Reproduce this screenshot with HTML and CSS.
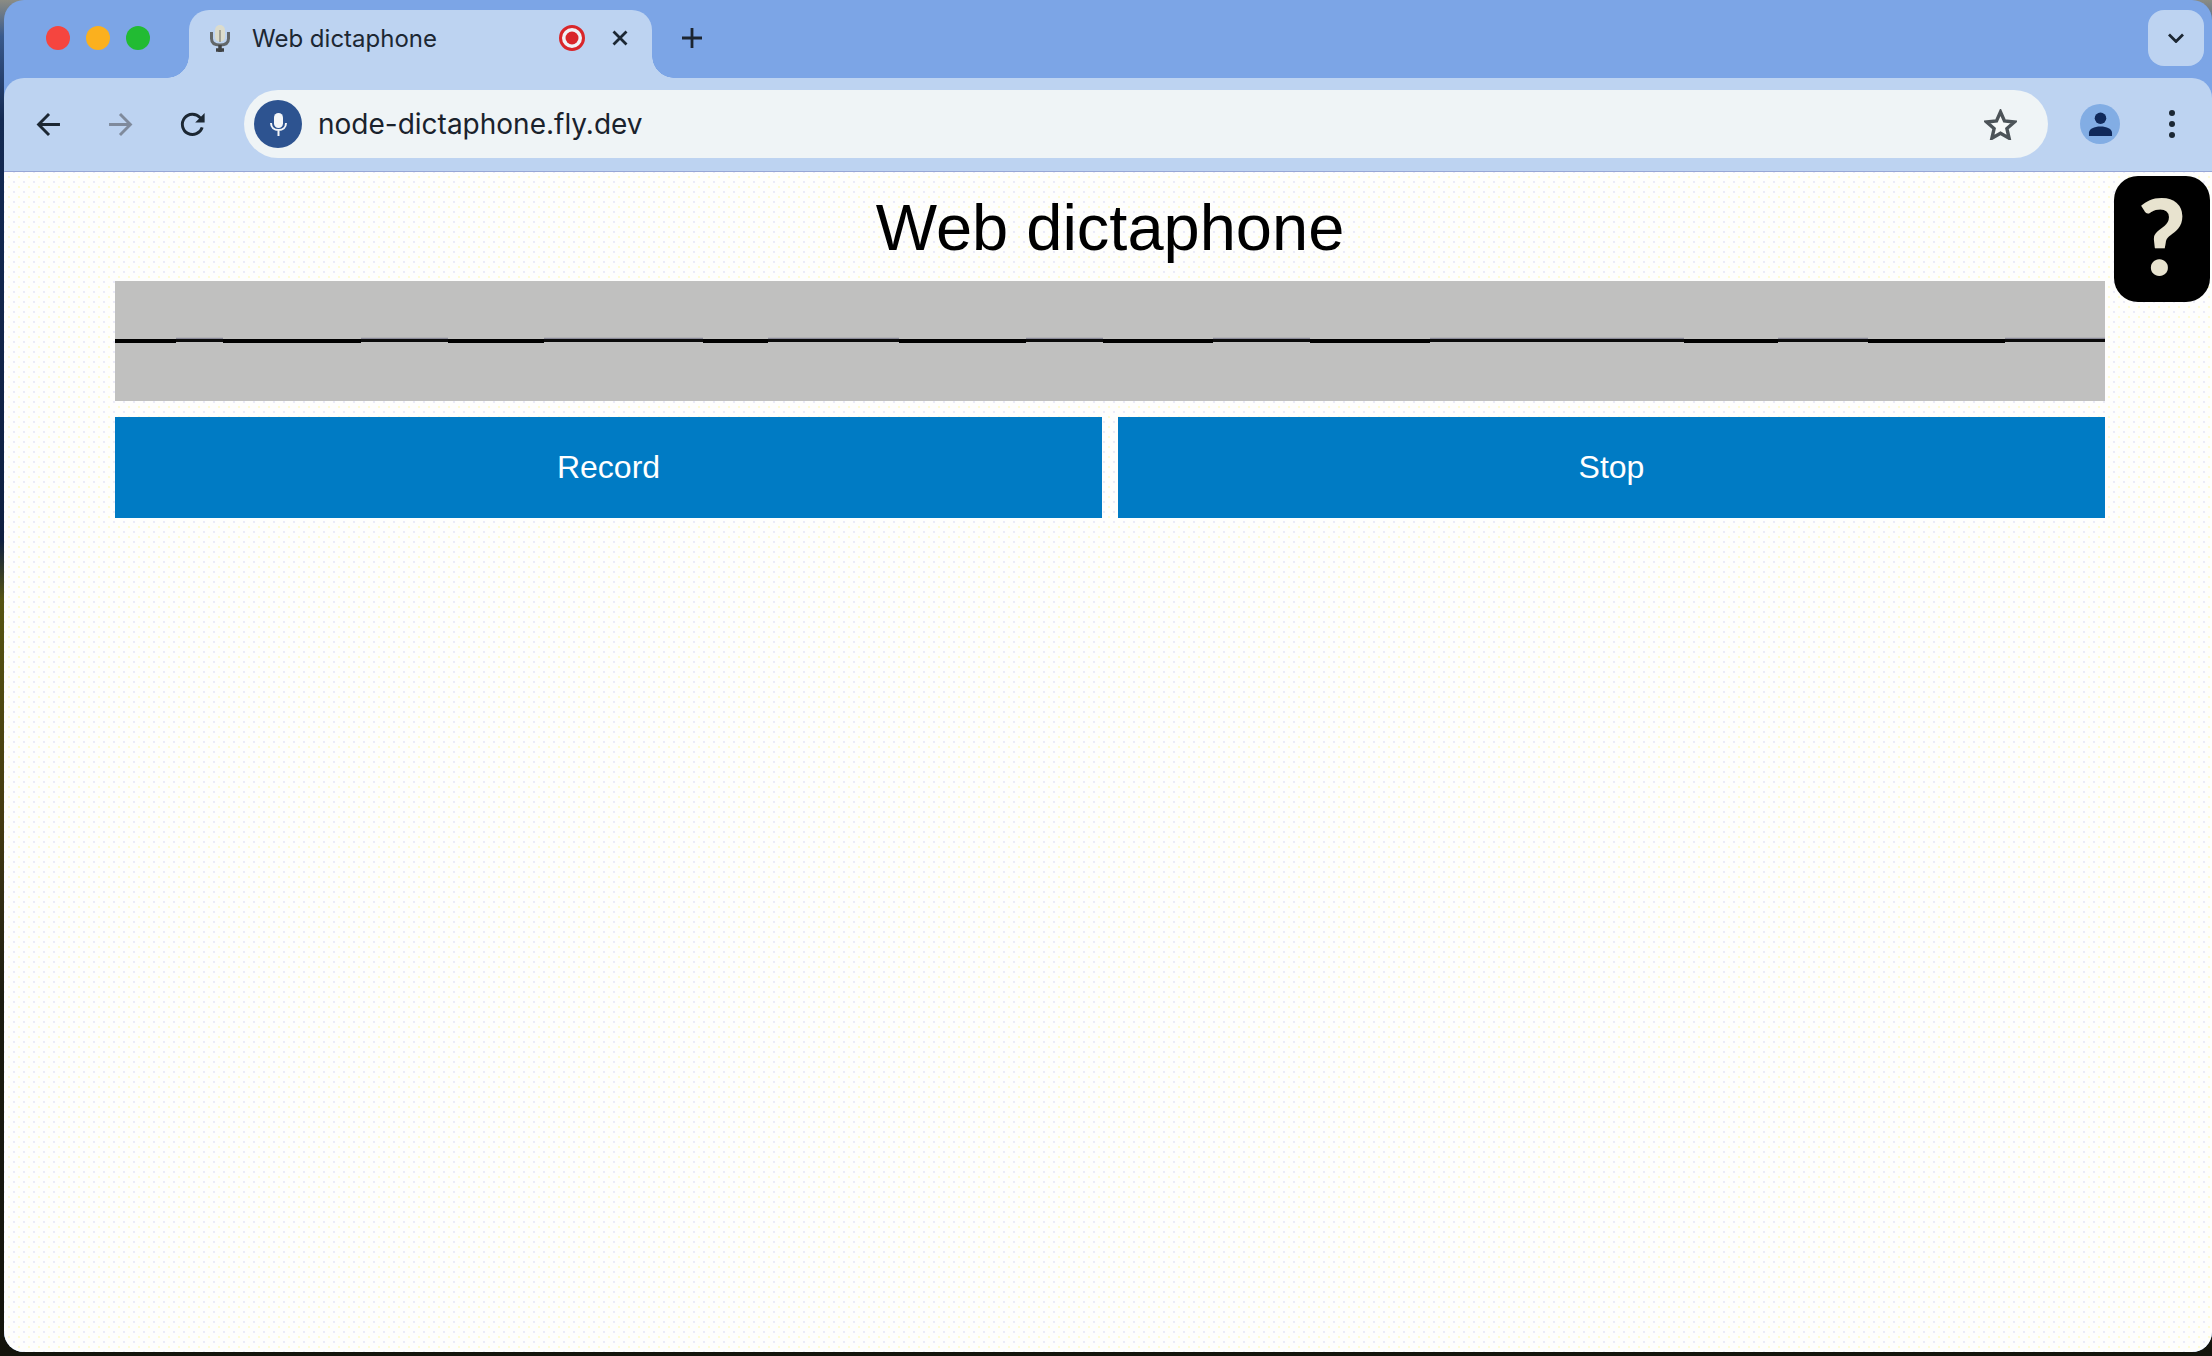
FILE: index.html
```html
<!DOCTYPE html>
<html lang="en">
<head>
<meta charset="utf-8">
<title>Web dictaphone</title>
<link rel="stylesheet" href="styles.css">
</head>
<body>
<div class="window">
  <header class="tabstrip">
    <div class="lights">
      <span class="light light-red"></span>
      <span class="light light-yellow"></span>
      <span class="light light-green"></span>
    </div>
    <div class="tab">
      <svg class="favicon" viewBox="0 0 20 27" width="20" height="27">
        <path d="M1.500 7v6.500c0 4 3 6.500 8.500 6.500s8.500-2.500 8.500-6.500V7" fill="none" stroke="#62676a" stroke-width="3"/>
        <rect x="5" y="0" width="10" height="17" rx="5" fill="#dcdccc"/>
        <rect x="9" y="5" width="2" height="12" fill="#a4a498"/>
        <path d="M10 20v7M6 25h8" stroke="#404346" stroke-width="3.500"/>
      </svg>
      <span class="tab-title">Web dictaphone</span>
      <svg class="rec" viewBox="0 0 26 26" width="26" height="26">
        <circle cx="13" cy="13" r="11.500" fill="#f0f2f6" stroke="#d9262a" stroke-width="3"/>
        <circle cx="13" cy="13" r="6.500" fill="#d9262a"/>
      </svg>
      <svg class="close" viewBox="0 0 16 16" width="16" height="16">
        <path d="M1.500 1.500l13 13M14.500 1.500l-13 13" stroke="#1c2733" stroke-width="2.800"/>
      </svg>
    </div>
    <svg class="newtab" viewBox="0 0 20 20" width="20" height="20">
      <path d="M10 0v20M0 10h20" stroke="#1c2530" stroke-width="2.800"/>
    </svg>
    <div class="tabsearch">
      <svg viewBox="0 0 16 10" width="16" height="10">
        <path d="M1 1.500l7 7 7-7" fill="none" stroke="#1c2733" stroke-width="2.800"/>
      </svg>
    </div>
  </header>
  <nav class="toolbar">
    <div class="navbtn">
      <svg viewBox="0 0 24 24" width="25" height="25"><path d="M23 12H2.500M12.500 2L2.500 12l10 10" fill="none" stroke="#1c2733" stroke-width="2.800"/></svg>
    </div>
    <div class="navbtn">
      <svg viewBox="0 0 24 24" width="25" height="25"><path d="M1 12h20.500M11.500 2l10 10-10 10" fill="none" stroke="#7f8a9c" stroke-width="2.800"/></svg>
    </div>
    <div class="navbtn">
      <svg viewBox="0 0 24 24" width="27" height="27"><path d="M20.600 14.500a9 9 0 1 1-1.900-8.600L21.500 8.600" fill="none" stroke="#1c2733" stroke-width="2.600"/><path d="M22.800 1.800v8.400h-8.400z" fill="#1c2733"/></svg>
    </div>
    <div class="omnibox">
      <span class="site-icon">
        <svg viewBox="0 0 17 23" width="17" height="23">
          <rect x="4" y="0" width="9" height="15" rx="4.500" fill="#f4f6f8"/>
          <path d="M1 10c0 4.500 3.200 7 7.500 7s7.500-2.500 7.500-7M8.500 17v6" fill="none" stroke="#f4f6f8" stroke-width="2"/>
        </svg>
      </span>
      <span class="url">node-dictaphone.fly.dev</span>
      <svg class="star" viewBox="0 0 34 32" width="33" height="31">
        <path d="M17 3l4.100 9.400 10.200 1-7.700 6.800 2.300 10L17 25l-8.900 5.200 2.300-10-7.700-6.800 10.200-1z" fill="#f6f8f8" stroke="#4c5358" stroke-width="3.500" stroke-linejoin="miter"/>
      </svg>
    </div>
    <div class="avatar">
      <svg viewBox="0 0 26 26" width="25" height="25">
        <circle cx="13" cy="6.500" r="6" fill="#10295a"/>
        <path d="M1 25v-3.500c0-4 5.500-6.500 12-6.500s12 2.500 12 6.500V25z" fill="#10295a"/>
      </svg>
    </div>
    <div class="menu"><i></i><i></i><i></i></div>
  </nav>
  <main class="page">
    <h1 class="title">Web dictaphone</h1>
    <div class="visualizer">
      <svg viewBox="0 0 1990 120" width="1990" height="120">
        <path class="wave-soft" d="M61 57.500h47M246 57.500h87M429 57.500h159M653 57.500h131M911 57.500h77M1098 57.500h97M1315 57.500h254M1663 57.500h90M1890 57.500h100"/>
        <path class="wave-thin" d="M61 59.500h47M246 59.500h87M429 59.500h159M653 59.500h131M911 59.500h77M1098 59.500h97M1315 59.500h254M1663 59.500h90M1890 59.500h100"/>
        <path class="wave-main" d="M0 60h61M108 60h138M333 60h96M588 60h65M784 60h127M988 60h110M1195 60h120M1569 60h94M1753 60h137"/>
      </svg>
    </div>
    <div class="controls">
      <button class="ctrl" type="button">Record</button>
      <button class="ctrl" type="button">Stop</button>
    </div>
    <div class="help">?</div>
  </main>
</div>
</body>
</html>
```

FILE: styles.css
```css
html, body {
  margin: 0;
  padding: 0;
  height: 100%;
}

body {
  width: 2212px;
  height: 1356px;
  overflow: hidden;
  background: #16160c;
  background-image: linear-gradient(180deg, #8b8c84 0, #3a5a8c 36px, #142a52 120px, #0f2040 540px, #565412 600px, #443a12 820px, #1c1c10 1000px, #14140c 1356px);
  font-family: "Liberation Sans", Arial, sans-serif;
}

.window {
  margin-left: 4px;
  width: 2208px;
  height: 1352px;
  display: flex;
  flex-direction: column;
  border-radius: 20px;
  overflow: hidden;
  background: #7ca5e6;
}

/* tab strip */
.tabstrip {
  height: 78px;
  flex: none;
  display: flex;
  align-items: flex-start;
  position: relative;
  z-index: 1;
}

.lights {
  display: flex;
  gap: 16px;
  margin: 26px 0 0 42px;
}

.light {
  width: 24px;
  height: 24px;
  border-radius: 50%;
}

.light-red { background: #f5453f; }
.light-yellow { background: #fbb01e; }
.light-green { background: #22bb33; }

.tab {
  position: relative;
  margin: 10px 0 0 39px;
  width: 463px;
  height: 68px;
  box-sizing: border-box;
  padding: 0 24px 12px 21px;
  display: flex;
  align-items: center;
  background: #bdd3f1;
  border-radius: 20px 20px 0 0;
}

.tab::before,
.tab::after {
  content: "";
  position: absolute;
  bottom: 0;
  width: 22px;
  height: 22px;
}

.tab::before {
  left: -22px;
  background: radial-gradient(circle at 0 0, transparent 21.500px, #bdd3f1 22px);
}

.tab::after {
  right: -22px;
  background: radial-gradient(circle at 100% 0, transparent 21.500px, #bdd3f1 22px);
}

.favicon { flex: none; }

.tab-title {
  margin-left: 22px;
  flex: 1;
  font-family: Inter, "Liberation Sans", sans-serif;
  font-size: 24px;
  color: #1c2733;
  white-space: nowrap;
}

.rec { flex: none; }

.close {
  flex: none;
  margin-left: 27px;
}

.newtab {
  margin: 28px 0 0 30px;
  flex: none;
}

.tabsearch {
  margin: 10px 8px 0 auto;
  width: 56px;
  height: 56px;
  border-radius: 16px;
  background: #bdd3f1;
  display: flex;
  align-items: center;
  justify-content: center;
}

/* toolbar */
.toolbar {
  height: 92px;
  padding: 0 0 1px 8px;
  flex: none;
  display: flex;
  align-items: center;
  background: #bdd3f1;
  border-bottom: 1px solid #97a6d6;
  border-radius: 20px 20px 0 0;
}

.navbtn {
  width: 72px;
  flex: none;
  display: flex;
  justify-content: center;
}

.omnibox {
  margin-left: 16px;
  flex: none;
  width: 1804px;
  height: 68px;
  box-sizing: border-box;
  padding: 0 31px 0 10px;
  border-radius: 34px;
  background: #eff4f6;
  display: flex;
  align-items: center;
}

.site-icon {
  width: 48px;
  height: 48px;
  flex: none;
  border-radius: 50%;
  background: #2d5390;
  display: flex;
  align-items: center;
  justify-content: center;
}

.url {
  margin-left: 16px;
  flex: 1;
  font-family: Inter, "Liberation Sans", sans-serif;
  font-size: 28px;
  color: #1a222c;
  white-space: nowrap;
}

.star { flex: none; }

.avatar {
  margin-left: 32px;
  width: 40px;
  height: 40px;
  flex: none;
  border-radius: 50%;
  background: #82ade4;
  display: flex;
  align-items: center;
  justify-content: center;
}

.menu {
  margin-left: 32px;
  width: 40px;
  flex: none;
  display: flex;
  flex-direction: column;
  align-items: center;
  gap: 5px;
}

.menu i {
  width: 6px;
  height: 6px;
  border-radius: 50%;
  background: #1c2733;
}

/* page */
.page {
  position: relative;
  flex: 1;
  box-sizing: border-box;
  padding: 19px 107px 0 111px;
  background-color: #fefefd;
  background-image:
    radial-gradient(circle, #fffbc8 0.6px, transparent 1px),
    radial-gradient(circle, #e4e4f8 0.6px, transparent 1px);
  background-size: 10px 10px;
  background-position: 0 0, 5px 5px;
}

.title {
  margin: 0 0 16px;
  font-size: 65px;
  line-height: 74px;
  font-weight: 400;
  text-align: center;
  color: #000;
}

.visualizer {
  height: 120px;
  background: #c0c0bf;
}

.visualizer svg { display: block; }

.visualizer path {
  fill: none;
}

.wave-main { stroke: #000; stroke-width: 4; }
.wave-thin { stroke: #0a0a0a; stroke-width: 3; }
.wave-soft { stroke: #8a8a98; stroke-width: 1.500; }

.controls {
  display: grid;
  grid-template-columns: 1fr 1fr;
  gap: 16px;
  margin-top: 16px;
}

.ctrl {
  height: 101px;
  border: 0;
  border-radius: 0;
  padding: 0;
  background: #007bc4;
  color: #fff;
  font-family: "Liberation Sans", Arial, sans-serif;
  font-size: 32px;
}

.help {
  position: absolute;
  top: 4px;
  right: 2px;
  width: 96px;
  height: 126px;
  border-radius: 24px;
  background: #000;
  color: #e8e3cf;
  font-family: Lato, sans-serif;
  font-weight: 900;
  font-size: 104px;
  line-height: 118px;
  text-align: center;
}
```
